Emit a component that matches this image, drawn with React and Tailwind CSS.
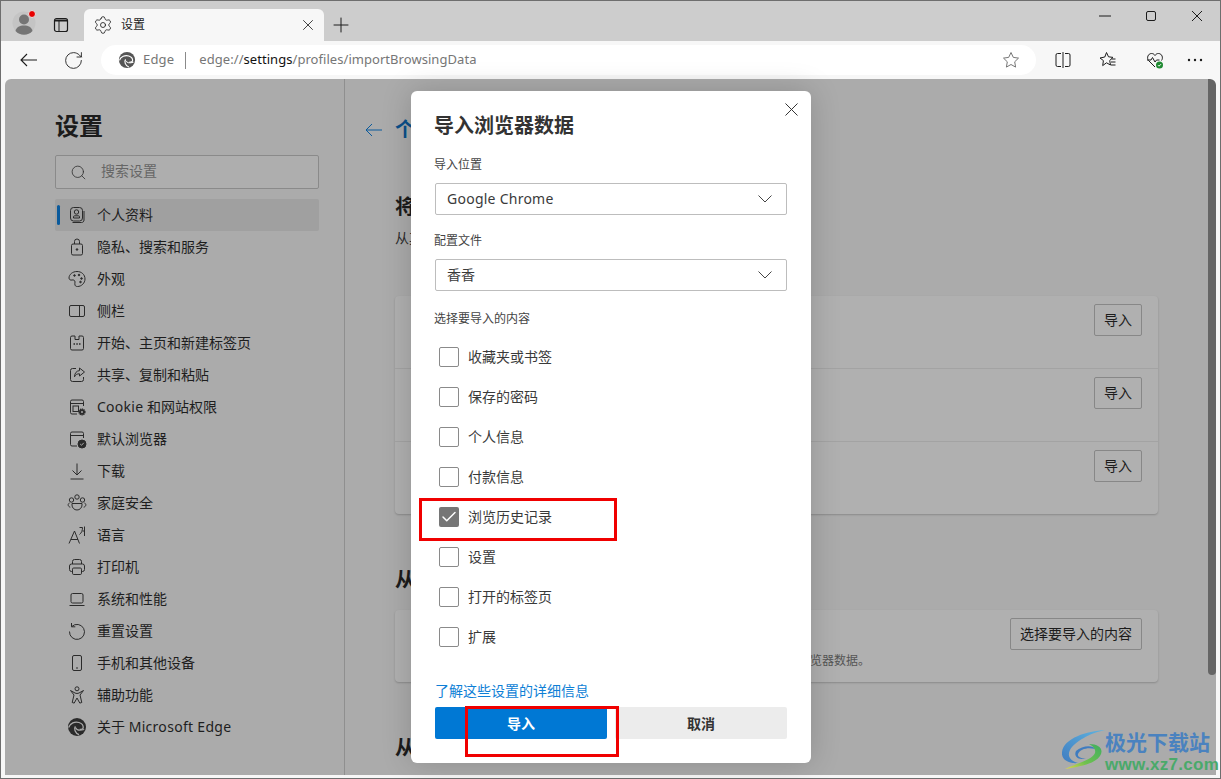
import { Check, Plus, RotateCw, Search, Settings, X } from "lucide-react";

const FONT = "font-['Noto_Sans','Noto_Sans_CJK_SC',sans-serif]";

// 20x20 outline icon wrapper for the settings menu
function Ico({ children }) {
  return (
    <svg width="20" height="20" viewBox="0 0 20 20" fill="none" stroke="#2b2b2b" strokeWidth="1" className="shrink-0">
      {children}
    </svg>
  );
}

function EdgeLogo({ size = 20, fill = "#2a2a2a", line = "#ababab" }) {
  return (
    <svg width={size} height={size} viewBox="0 0 20 20" className="shrink-0">
      <circle cx="10" cy="10" r="9" fill={fill} />
      <path d="M1.600 10.500C3 6 8 4.200 12 5.500c3 1 4.400 3.200 4.200 5.200-.1 1.400-1.700 1.800-3.600 1.600" fill="none" stroke={line} strokeWidth="1.300" />
      <path d="M8.400 9.400c-1.600 2.200-.6 6.500 3.600 8.300" fill="none" stroke={line} strokeWidth="1.300" />
      <path d="M8.400 10.500c1 2.600 4.200 3.400 8.800 2" fill="none" stroke={line} strokeWidth="1.100" />
    </svg>
  );
}

const menu = [
  [<>个人资料</>, <Ico><rect x="3.500" y="2.500" width="12" height="13.500" rx="3" /><circle cx="9.500" cy="7" r="2.200" /><path d="M6.500 13v-1.200c0-.6.5-1 1-1h4c.6 0 1 .4 1 1V13zM5.500 17.500h9c1.500 0 2.500-1 2.500-2.500V6" /></Ico>],
  [<>隐私、搜索和服务</>, <Ico><rect x="4.500" y="7" width="11" height="11" rx="1.500" /><path d="M7.500 7V4.500a2.500 2.500 0 0 1 5 0V7" /><circle cx="10" cy="12.500" r=".8" fill="#2b2b2b" /></Ico>],
  [<>外观</>, <Ico><path d="M10 2.500c-4.500 0-8 3-8 6.500 0 1.700 1.500 2.400 3 2 1.700-.4 3 .4 3 2 0 1.500-.4 2.300 0 3.200.5 1 1.400 1.300 2.500 1.300 4 0 7.500-3.500 7.500-7.500 0-4.500-3.500-7.500-8-7.500z" /><circle cx="7.500" cy="6.500" r=".8" fill="#2b2b2b" /><circle cx="12" cy="6" r=".8" fill="#2b2b2b" /><circle cx="14.500" cy="9.500" r=".8" fill="#2b2b2b" /><circle cx="13.500" cy="13" r=".8" fill="#2b2b2b" /></Ico>],
  [<>侧栏</>, <Ico><rect x="2.500" y="4.500" width="15" height="11" rx="1.500" /><path d="M12.500 4.500v11" /></Ico>],
  [<>开始、主页和新建标签页</>, <Ico><path d="M8 3H5a1.500 1.500 0 0 0-1.500 1.500v11A1.500 1.500 0 0 0 5 17h10a1.500 1.500 0 0 0 1.500-1.500v-11A1.500 1.500 0 0 0 15 3h-3v3.500H8z" /><path d="M6.500 11h1.500M9.300 11h1.500M12 11h1.500" strokeWidth="1.500" /></Ico>],
  [<>共享、复制和粘贴</>, <Ico><path d="M9 3.500H5.500a2 2 0 0 0-2 2v9a2 2 0 0 0 2 2h9a2 2 0 0 0 2-2V12" /><path d="M12.500 3l5 4-5 4V8.800c-2.500 0-4 .8-5 3 0-3.500 2-6 5-6.200z" /></Ico>],
  [<><span className="tracking-[0.25px]">Cookie</span> 和网站权限</>, <Ico><path d="M10 17H5a1.500 1.500 0 0 1-1.500-1.500v-11A1.500 1.500 0 0 1 5 3h10a1.500 1.500 0 0 1 1.500 1.500V9M3.500 6.500h13" /><rect x="6" y="9" width="5.500" height="5.500" /><circle cx="15" cy="15" r="2.800" fill="#2b2b2b" stroke="#2b2b2b" strokeDasharray="1.200 .6" strokeWidth="1.600" /><circle cx="15" cy="15" r="1" fill="#ababab" stroke="none" /></Ico>],
  [<>默认浏览器</>, <Ico><path d="M10 17H5a1.500 1.500 0 0 1-1.500-1.500v-11A1.500 1.500 0 0 1 5 3h10a1.500 1.500 0 0 1 1.500 1.500V9M3.500 6.500h13" /><circle cx="15" cy="15" r="4" fill="#2b2b2b" /><path d="M13.200 15l1.300 1.300 2.300-2.500" stroke="#ababab" /></Ico>],
  [<>下载</>, <Ico><path d="M10 2.500V14M5.500 9.500L10 14l4.500-4.500M3.500 18h13" /></Ico>],
  [<>家庭安全</>, <Ico><circle cx="4.500" cy="7" r="2.200" /><circle cx="15.500" cy="7" r="2.200" /><circle cx="10" cy="4" r="2.200" /><path d="M5 10.500h10v1.500a5 5 0 0 1-10 0zM2.500 10c-2 .8-1.800 3.500.8 4.200M17.500 10c2 .8 1.800 3.500-.8 4.200" /></Ico>],
  [<>语言</>, <Ico><path d="M2 18.500L7.500 6l5 12.500M4 14.500h7M12.500 2.500h3c0 3-1 5.500-3 7M17.500 1.500v9.500M17.500 6h-2" /></Ico>],
  [<>打印机</>, <Ico><path d="M5.500 7V4.500a2 2 0 0 1 2-2h5a2 2 0 0 1 2 2V7" /><path d="M5.500 14.500H4.500a2 2 0 0 1-2-2V9a2 2 0 0 1 2-2h11a2 2 0 0 1 2 2v3.500a2 2 0 0 1-2 2h-1" /><rect x="5.500" y="11" width="9" height="6.500" rx="1.200" /></Ico>],
  [<>系统和性能</>, <Ico><rect x="4" y="4.500" width="12" height="9.500" rx="1.500" /><path d="M2.500 16.500h15" /></Ico>],
  [<>重置设置</>, <Ico><path d="M4.800 5.500A7.500 7.500 0 1 1 2.500 10.500" /><path d="M4.500 2v3.800h3.800" /></Ico>],
  [<>手机和其他设备</>, <Ico><rect x="5.500" y="2.500" width="9" height="15" rx="1.500" /><path d="M9 15h2" /></Ico>],
  [<>辅助功能</>, <Ico><circle cx="10" cy="3.800" r="2" /><path d="M3.500 5.500L8 8c1.300.6 2.700.6 4 0l4.500-2.500L13 10l1.800 7.500-2 .6L10 13l-2.800 5.100-2-.6L7 10z" /></Ico>],
  [<>关于 <span className="tracking-[0.3px]">Microsoft Edge</span></>, <EdgeLogo />],
];

function OutlineBtn({ children, className = "" }) {
  return (
    <button className={`h-8 rounded-[2px] border border-[#878787] text-[14px] leading-none text-[#1c1c1c] ${className}`}>
      {children}
    </button>
  );
}

function ImportRow({ first }) {
  return (
    <div className={`flex justify-end pr-4 pt-2 ${first ? "h-[72px]" : "h-[73px] border-t border-[#a3a3a3]"}`}>
      <OutlineBtn className="w-12">导入</OutlineBtn>
    </div>
  );
}

function Sidebar() {
  return (
    <aside className="flex w-[340px] shrink-0 flex-col border-r border-[#8f8f8f] pl-[50px] pr-[25px] pt-[31px]">
      <h1 className="text-[24px] font-bold leading-8 text-[#1c1c1c]">设置</h1>
      <div className="mt-[13px] flex h-[34px] items-center rounded-[2px] border border-[#8a8a8a] bg-[#aeaeae] pl-[14px]">
        <Search size={17} strokeWidth={1.1} color="#2b2b2b" />
        <span className="ml-[14px] pb-[4px] text-[14px] text-[#666666]">搜索设置</span>
      </div>
      <nav className="mt-[10px] flex flex-col">
        {menu.map(([label, icon], i) => (
          <div key={i} className={`flex h-8 items-center rounded-[2px] pl-[2px] ${i === 0 ? "bg-[#a0a0a0]" : ""}`}>
            <span className={`h-5 w-[3px] rounded-full ${i === 0 ? "bg-[#0a5a9c]" : ""}`} />
            <span className="ml-[7px] flex">{icon}</span>
            <span className="ml-[10px] pb-[2px] text-[14px] text-[#1e1e1e]">{label}</span>
          </div>
        ))}
      </nav>
    </aside>
  );
}

function MainPane() {
  return (
    <main className="h-full min-w-0 flex-1 overflow-hidden pl-[50px] pr-[50px] pt-[35px]">
      <div className="flex h-8 items-center">
        <svg width="18" height="14" viewBox="0 0 18 14" fill="none" stroke="#0a5a9c" strokeWidth="1" className="-ml-[30px]">
          <path d="M17 7H1M7 1L1 7l6 6" />
        </svg>
        <span className="ml-3 text-[20px] font-bold text-[#0a4f8a]">个</span>
      </div>
      <h2 className="mt-[47px] text-[20px] font-bold leading-7 text-[#1c1c1c]">将</h2>
      <p className="mt-[7px] text-[14px] leading-5 text-[#2b2b2b]">从其</p>
      <section className="mt-[48px] rounded-[4px] bg-[#b0b0b0] shadow-[0_1px_2px_rgba(0,0,0,0.2)]">
        <ImportRow first />
        <ImportRow />
        <ImportRow />
      </section>
      <h2 className="mt-[52px] text-[20px] font-bold leading-7 text-[#1c1c1c]">从</h2>
      <section className="mt-4 h-[72px] rounded-[4px] bg-[#b0b0b0] pt-2 shadow-[0_1px_2px_rgba(0,0,0,0.2)]">
        <div className="flex justify-end pr-4">
          <OutlineBtn className="w-[132px]">选择要导入的内容</OutlineBtn>
        </div>
        <p className="ml-[415px] mt-[1px] text-[12px] leading-5 text-[#555555]">览器数据。</p>
      </section>
      <h2 className="mt-[52px] text-[20px] font-bold leading-7 text-[#1c1c1c]">从</h2>
    </main>
  );
}

function Field({ value, latin }) {
  return (
    <div className="flex h-8 items-center justify-between rounded-[2px] border border-[#bdbdbd] pl-[11px] pr-[14px] text-[14px] text-[#3a3a3a]">
      <span className={`pb-[2px] ${latin ? "tracking-[0.25px]" : ""}`}>{value}</span>
      <svg width="14" height="8" viewBox="0 0 14 8" fill="none" stroke="#444444" strokeWidth="1" className="shrink-0">
        <path d="M.5.5L7 7l6.500-6.500" />
      </svg>
    </div>
  );
}

const options = ["收藏夹或书签", "保存的密码", "个人信息", "付款信息", "浏览历史记录", "设置", "打开的标签页", "扩展"];

function ImportDialog() {
  return (
    <div className="absolute left-[411px] top-[91px] h-[672px] w-[400px] rounded-[6px] bg-white px-6 pt-[21px] shadow-[0_0_30px_rgba(0,0,0,0.18)]">
      <X size={23} strokeWidth={1} color="#2b2b2b" className="absolute right-[8px] top-[7px]" />
      <h2 className="-ml-px text-[20px] font-bold leading-7 text-[#333333]">导入浏览器数据</h2>
      <div className="mt-[17px] -ml-px text-[12px] leading-4 text-[#444444]">导入位置</div>
      <div className="mt-[10px]"><Field value="Google Chrome" latin /></div>
      <div className="mt-[18px] -ml-px text-[12px] leading-4 text-[#444444]">配置文件</div>
      <div className="mt-[10px]"><Field value="香香" /></div>
      <div className="mt-[20px] -ml-px text-[12px] leading-4 text-[#444444]">选择要导入的内容</div>
      <div className="mt-[10px] flex flex-col">
        {options.map((o) => {
          const on = o === "浏览历史记录";
          return (
            <label key={o} className="flex h-10 items-center pl-1">
              <span className={`flex h-5 w-5 items-center justify-center rounded-[2px] ${on ? "bg-[#767676]" : "border border-[#8a8a8a]"}`}>
                {on && <Check size={18} strokeWidth={2} color="#ffffff" />}
              </span>
              <span className="ml-[9px] pb-[2px] text-[14px] text-[#3a3a3a]">{o}</span>
            </label>
          );
        })}
      </div>
      <a className="mt-[25px] block text-[14px] leading-[18px] text-[#0f7fd6]">了解这些设置的详细信息</a>
      <div className="mt-[7px] flex gap-2">
        <button className="h-8 w-[172px] rounded-[2px] bg-[#0078d4] text-[14px] font-bold text-white">导入</button>
        <button className="h-8 w-[172px] rounded-[2px] bg-[#ececec] text-[14px] font-bold text-[#333333]">取消</button>
      </div>
    </div>
  );
}

function Watermark() {
  return (
    <div className="absolute left-[1062px] top-[729px] flex items-start">
      <svg width="44" height="42" viewBox="0 -1 44 42" className="shrink-0">
        <defs>
          <linearGradient id="wmBlue" x1="1" y1="0" x2="0" y2="1">
            <stop offset="0" stopColor="#5fb4e0" />
            <stop offset="1" stopColor="#3f7cc0" />
          </linearGradient>
          <linearGradient id="wmGreen" x1="1" y1="0" x2="0" y2="1">
            <stop offset="0" stopColor="#3faf5f" />
            <stop offset="0.6" stopColor="#6fc04f" />
            <stop offset="1" stopColor="#e3d94a" />
          </linearGradient>
        </defs>
        <path d="M43 0C25 1 2 8 0 22c-1 8 7 12 16 11-8-2-11-7-8-13C12 12 28 3 43 0z" fill="url(#wmBlue)" />
        <path d="M14 21c6-6 18-6 19-2-7-2-15 0-17 5-1 3 4 5 8 4-6 3-13-1-10-7z" fill="#3f7cc0" />
        <path d="M27 14c11 0 15 6 11 12-5 8-22 11-35 13 13-6 27-9 30-16 1-4-2-7-6-9z" fill="url(#wmGreen)" />
      </svg>
      <div className="-ml-px flex flex-col">
        <span className="text-[21px] font-bold leading-[26px] text-[#4a82bf]">极光下载站</span>
        <span className="font-['Liberation_Sans',sans-serif] text-[17px] font-bold leading-[20px] tracking-[0.3px] text-[#4aa96a]">www.xz7.com</span>
      </div>
    </div>
  );
}

function TabStrip() {
  return (
    <div className="flex h-10 shrink-0 items-end bg-[#cdcdcd]">
      <div className="mb-[4px] ml-[11px] flex h-6 w-6">
        <svg width="24" height="26" viewBox="0 0 24 26" className="-mt-[4px] shrink-0">
          <circle cx="12" cy="14" r="11.500" fill="#c4c4c4" />
          <circle cx="12" cy="10.500" r="5" fill="#757575" />
          <path d="M3.500 22c1-4 4-5.500 8.500-5.500s7.500 1.500 8.500 5.500a11.500 11.500 0 0 1-17 0z" fill="#757575" />
          <circle cx="20" cy="5" r="3.500" fill="#e80000" stroke="#e4e4e4" strokeWidth="1" />
        </svg>
      </div>
      <svg width="16" height="16" viewBox="0 0 16 16" fill="none" stroke="#1c1c1c" className="mb-2 ml-[17px] shrink-0">
        <rect x="1.500" y="1.500" width="13" height="13" rx="2" strokeWidth="1.200" />
        <path d="M2 3.500h12" strokeWidth="2" />
        <path d="M6 4v10" strokeWidth="1" />
      </svg>
      <div className="ml-[15px] flex h-8 w-[240px] items-center rounded-t-[6px] bg-[#f7f7f7] pl-[9px] pr-[7px]">
        <Settings size={20} strokeWidth={1} color="#1c1c1c" />
        <span className="ml-[8px] flex-1 pb-[1px] text-[12px] text-[#1c1c1c]">设置</span>
        <X size={18} strokeWidth={1.1} color="#1c1c1c" />
      </div>
      <Plus size={24} strokeWidth={1} color="#1c1c1c" className="mb-[4px] ml-[5px]" />
      <div className="mb-[10px] ml-auto flex items-center self-start pt-[9px]">
        <svg width="12" height="12" viewBox="0 0 12 12" stroke="#1c1c1c" className="mr-[34px]"><path d="M0 6h12" /></svg>
        <svg width="12" height="12" viewBox="0 0 12 12" fill="none" stroke="#1c1c1c" className="mr-[34px]"><rect x="1.500" y="1.500" width="9" height="9" rx="1.500" /></svg>
        <svg width="12" height="12" viewBox="0 0 12 12" stroke="#1c1c1c" className="mr-[17px]"><path d="M1 1l10 10M11 1L1 11" /></svg>
      </div>
    </div>
  );
}

function Toolbar() {
  return (
    <div className="flex h-[38px] shrink-0 items-center bg-[#f7f7f7]">
      <svg width="18" height="14" viewBox="0 0 18 14" fill="none" stroke="#1c1c1c" strokeWidth="1.100" className="ml-[19px] shrink-0">
        <path d="M17 7H1M7 1L1 7l6 6" />
      </svg>
      <RotateCw size={21} strokeWidth={1} color="#1c1c1c" className="ml-[25px] shrink-0" />
      <div className="ml-[17px] flex h-[30px] w-[935px] items-center rounded-full bg-white pl-[17px] pr-[16px]">
        <EdgeLogo size={18} fill="#555555" line="#ffffff" />
        <span className="ml-[7px] pb-[1px] text-[13px] tracking-[0.2px] text-[#767676]">Edge</span>
        <span className="ml-[11px] h-[17px] w-px bg-[#8a8a8a]" />
        <span className="ml-[13px] flex-1 pb-[1px] text-[13px] tracking-[0.05px] text-[#767676]">
          edge://<span className="text-[#111111]">settings</span>/profiles/importBrowsingData
        </span>
        <svg width="18" height="18" viewBox="0 0 18 18" fill="none" stroke="#767676" strokeWidth="1">
          <path d="M9 1.500l2.300 4.900 5.200.7-3.800 3.700.9 5.300L9 13.500l-4.600 2.600.9-5.300L1.500 7.100l5.200-.7z" />
        </svg>
      </div>
      <svg width="18" height="18" viewBox="0 0 18 18" fill="none" stroke="#1c1c1c" className="ml-[18px] shrink-0">
        <path d="M7 2.500H3.500A1.500 1.500 0 0 0 2 4v10a1.500 1.500 0 0 0 1.500 1.500H7M11 2.500h3.500A1.500 1.500 0 0 1 16 4v10a1.500 1.500 0 0 1-1.500 1.500H11M9 1v16" />
      </svg>
      <svg width="18" height="18" viewBox="0 0 18 18" fill="none" stroke="#1c1c1c" className="ml-[27px] shrink-0">
        <path d="M7.500 1.500l2 4.300 4.500.6-3.300 3.100.8 4.500-4-2.200-3.800 2.800.7-5L1 7l4.800-1z" />
        <path d="M12.500 8h4M12 11h4.500M12 14h4.500" />
      </svg>
      <svg width="18" height="18" viewBox="0 0 18 18" fill="none" className="ml-[29px] shrink-0">
        <path d="M9 16L2.500 9.500C.5 7 2 2.500 5.500 2.500 7 2.500 8 3 9 4.500 10 3 11 2.500 12.500 2.500 16 2.500 17.500 7 15.500 9.500" stroke="#1c1c1c" />
        <path d="M1 9h4l1.500-2.500L9 11l1.500-2h3" stroke="#1c1c1c" />
        <circle cx="13.500" cy="14" r="3.500" fill="#1f8a32" />
        <path d="M12 14.200l1 1 2-2" stroke="#ffffff" />
      </svg>
      <svg width="16" height="4" viewBox="0 0 16 4" fill="#1c1c1c" className="ml-[23px] shrink-0">
        <circle cx="2" cy="2" r="1.200" /><circle cx="8" cy="2" r="1.200" /><circle cx="14" cy="2" r="1.200" />
      </svg>
    </div>
  );
}

export default function App() {
  return (
    <div className={`relative h-[779px] w-[1221px] overflow-hidden ${FONT}`}>
      <div className="flex h-full flex-col border border-[#6e6e6e] bg-[#f7f7f7]">
        <TabStrip />
        <Toolbar />
        <div className="flex min-h-0 flex-1 px-[4px] pb-[3px]">
          <div className="flex min-w-0 flex-1 overflow-hidden rounded-t-[6px] bg-[#ababab]">
            <Sidebar />
            <MainPane />
            <div className="w-2 shrink-0">
              <div className="h-[596px] rounded-b-[4px] rounded-tr-[6px] bg-[#656565]" />
            </div>
          </div>
        </div>
      </div>
      <ImportDialog />
      <div className="absolute left-[419px] top-[498px] h-[43px] w-[198px] border-[3px] border-[#f00000]" />
      <div className="absolute left-[465px] top-[706px] h-[51px] w-[154px] border-[3px] border-[#f00000]" />
      <Watermark />
    </div>
  );
}
